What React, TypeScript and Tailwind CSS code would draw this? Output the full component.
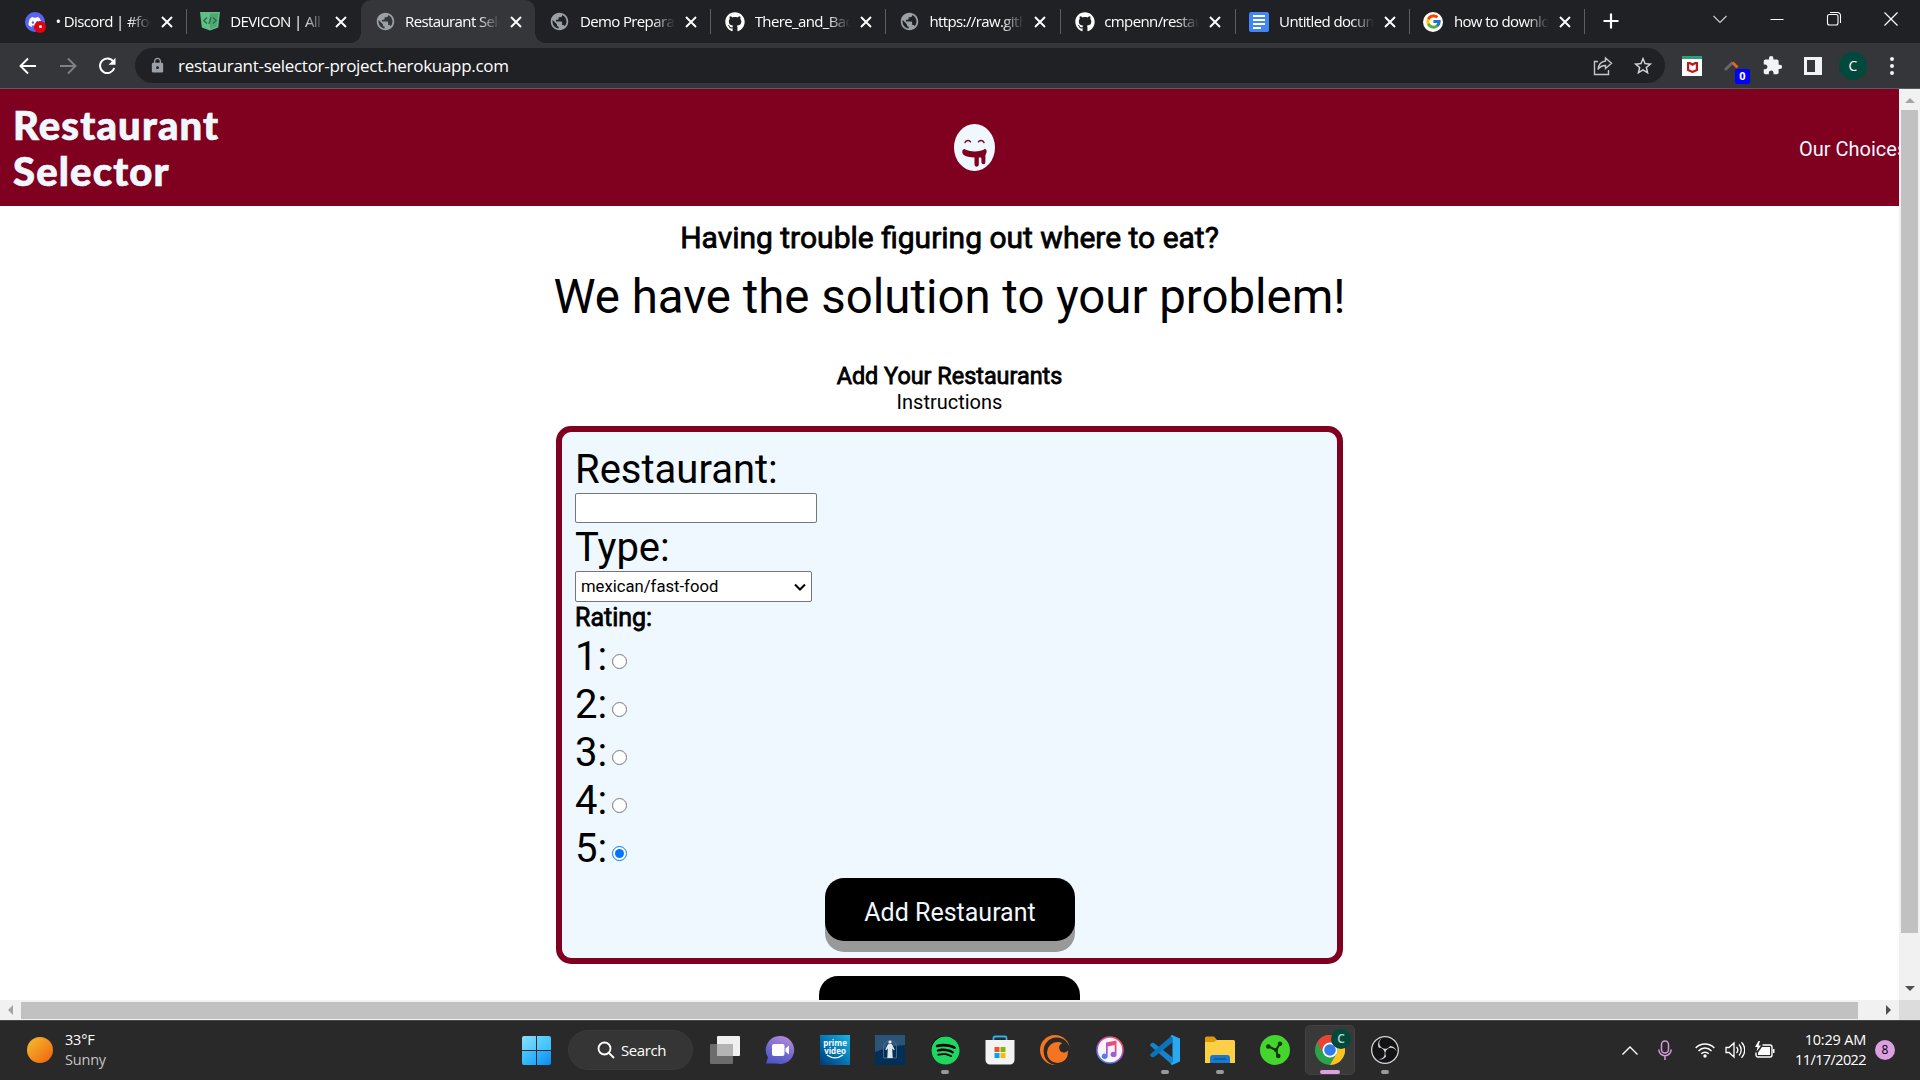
import React from 'react';
import { FaGithub, FaDiscord, FaSpotify } from 'react-icons/fa';
import { MdPublic, MdExtension, MdLock, MdStarBorder } from 'react-icons/md';
import { FcGoogle } from 'react-icons/fc';
import { SiCrunchyroll, SiObsstudio } from 'react-icons/si';

type TabData = { title: string; icon: React.ReactNode; active?: boolean; sep?: boolean };

const Globe = () => <MdPublic className="size-[21px] text-[#9aa0a6]" />;
const Github = () => <FaGithub className="ml-px size-5 text-white" />;

const DiscordIcon = () => (
  <span className="relative block size-5 rounded-full bg-[#5865f2]">
    <FaDiscord className="ml-[3px] size-[14px] translate-y-[3px] text-white" />
    <span className="absolute -right-px -bottom-px flex size-3 items-center justify-center rounded-full bg-[#e3000f]">
      <span className="size-[3px] rounded-full bg-white" />
    </span>
  </span>
);

const DeviconIcon = () => (
  <svg viewBox="0 0 20 20" className="size-5">
    <path d="M0 0h20l-1.8 15.5L10 18.6 1.8 15.500z" fill="#60be86" />
    <path d="M10 1.500h8.200L16.700 14.500 10 17z" fill="#4fa873" />
    <path d="M7 5.500 3.800 8.500 7 11.500M13 5.500l3.200 3-3.200 3M11 5 9 12" stroke="#2c6b47" strokeWidth="1.300" fill="none" />
  </svg>
);

const DocsIcon = () => (
  <span className="flex size-5 flex-col justify-center gap-[2px] rounded-[2px] bg-[#4285f4] px-1">
    <span className="h-[2px] bg-white" />
    <span className="h-[2px] bg-white" />
    <span className="h-[2px] bg-white" />
    <span className="h-[2px] w-2 bg-white" />
  </span>
);

const GoogleIcon = () => (
  <span className="flex size-5 items-center justify-center rounded-full bg-white">
    <FcGoogle className="size-[17px]" />
  </span>
);

const tabs: TabData[] = [
  { title: '• Discord | #food', icon: <DiscordIcon />, sep: true },
  { title: 'DEVICON | All pro', icon: <DeviconIcon /> },
  { title: 'Restaurant Selec', icon: <Globe />, active: true },
  { title: 'Demo Preparati', icon: <Globe />, sep: true },
  { title: 'There_and_Back', icon: <Github />, sep: true },
  { title: 'https://raw.gith', icon: <Globe />, sep: true },
  { title: 'cmpenn/restaur', icon: <Github />, sep: true },
  { title: 'Untitled docum', icon: <DocsIcon />, sep: true },
  { title: 'how to downlo', icon: <GoogleIcon />, sep: true },
];

function Tab({ title, icon, active, sep }: TabData) {
  return (
    <div className={'relative flex h-[43px] w-[174.8px] shrink-0 items-center ' + (active ? 'rounded-t-[10px] bg-[#35363a]' : '')}>
      {active && (
        <>
          <span className="absolute bottom-0 -left-[10px] size-[10px] bg-[radial-gradient(circle_at_0_0,transparent_9.500px,#35363a_10px)]" />
          <span className="absolute -right-[10px] bottom-0 size-[10px] bg-[radial-gradient(circle_at_100%_0,transparent_9.500px,#35363a_10px)]" />
        </>
      )}
      <span className="ml-[14px] w-[30.5px] shrink-0">{icon}</span>
      <span className="-mt-px w-[95px] overflow-hidden text-[15px] leading-[40px] tracking-[-0.62px] whitespace-nowrap text-white [mask-image:linear-gradient(to_right,black_76%,transparent_100%)]">
        {title}
      </span>
      <svg viewBox="0 0 10 10" className="ml-[11px] size-[10px] shrink-0 overflow-visible" stroke="#fff" strokeWidth="1.900">
        <path d="M0 0 10 10M10 0 0 10" />
      </svg>
      {sep && <span className="absolute top-[9px] right-[-1px] h-[25px] w-px bg-[#5c5e62]" />}
    </div>
  );
}

function TabStrip() {
  return (
    <div className="flex h-[43px] bg-[#202124] pl-[11px]">
      {tabs.map((t) => (
        <Tab key={t.title} {...t} />
      ))}
      <svg viewBox="0 0 16 16" className="mt-[13px] ml-[19px] size-4" stroke="#fff" strokeWidth="2.200">
        <path d="M8 .5v15M.5 8h15" />
      </svg>
      <div className="ml-auto flex items-center gap-[43px] pr-[22px] pb-[6px]">
        <svg viewBox="0 0 14 14" className="size-[14px]" fill="none" stroke="#d0d0d0" strokeWidth="1.100">
          <path d="M.5 4 7 10.500 13.500 4" />
        </svg>
        <svg viewBox="0 0 14 14" className="size-[14px]" stroke="#fff" strokeWidth="1">
          <path d="M.5 7.500h13" />
        </svg>
        <svg viewBox="0 0 14 14" className="size-[14px] overflow-visible" fill="none" stroke="#fff" strokeWidth="1.100">
          <rect x=".5" y="2.500" width="10.500" height="10.500" rx="2" />
          <path d="M3 .5h7.500a3 3 0 0 1 3 3V11" />
        </svg>
        <svg viewBox="0 0 14 14" className="size-[14px]" stroke="#fff" strokeWidth="1.200">
          <path d="M.5.5l13 13M13.500.5l-13 13" />
        </svg>
      </div>
    </div>
  );
}

function Toolbar() {
  return (
    <div className="flex h-[46px] items-center border-b border-[#5b5c60] bg-[#35363a] pl-[19px]">
      <svg viewBox="0 0 18 18" className="size-[18px]" fill="none" stroke="#fff" strokeWidth="1.900">
        <path d="M17 9H2M9 1.500 1.500 9 9 16.500" />
      </svg>
      <svg viewBox="0 0 18 18" className="ml-[22px] size-[18px]" fill="none" stroke="#7f8185" strokeWidth="1.900">
        <path d="M1 9h15M9 1.500 16.500 9 9 16.500" />
      </svg>
      <svg viewBox="0 0 18 18" className="ml-[21px] size-[18px]" fill="none" stroke="#fff" strokeWidth="2">
        <path d="M15.300 4.500A7.300 7.300 0 1 0 16.300 11" />
        <path d="M17.500.8v7h-7z" fill="#fff" stroke="none" />
      </svg>
      <div className="ml-[19px] flex h-[35px] w-[1530px] items-center rounded-full bg-[#202124] pl-[14px]">
        <MdLock className="size-[17px] text-[#9aa0a6]" />
        <span className="ml-[12px] text-[17px] leading-[35px] tracking-[-0.29px] text-white">restaurant-selector-project.herokuapp.com</span>
        <svg viewBox="0 0 20 20" className="ml-auto size-5" fill="none" stroke="#c4c7ca" strokeWidth="1.400">
          <path d="M5 5.500H1.500v13h14V14M12.500 2l6 5.300-6 5.200V9.500c-3 0-5.500.8-7.500 4 .5-5 3.500-8 7.500-8.500z" />
        </svg>
        <MdStarBorder className="mr-[11px] ml-[19px] size-[22px] text-[#d3d5d8]" />
      </div>
      <div className="ml-[17px] flex h-5 w-5 flex-col items-center border-t-[3px] border-[#2ba17b] bg-white pt-[3px]">
        <svg viewBox="0 0 10 10" className="size-[11px]" fill="none" stroke="#c01818" strokeWidth="2">
          <path d="M1 0v7.300L5 9 9 7.300V0L5 2.500z" />
        </svg>
      </div>
      <div className="relative ml-[22px] h-5 w-[26px]">
        <svg viewBox="0 0 18 10" className="mt-[5px] h-[10px] w-[18px]" fill="none" strokeWidth="2.800">
          <path d="M1 9 8.500 1.500" stroke="#66686b" />
          <path d="M8.500 1.500l5 5" stroke="#e8622a" />
        </svg>
        <span className="absolute top-[13px] left-[11px] flex h-[15px] w-[15px] items-center justify-center rounded-[2px] bg-[#0000ff] text-[11px] font-bold text-white">0</span>
      </div>
      <MdExtension className="ml-[12px] size-[21px] text-[#f1f3f4]" />
      <span className="ml-[21px] h-[18px] w-[18px] border-[3px] border-r-[7px] border-[#f1f3f4]" />
      <span className="ml-[17px] flex size-7 items-center justify-center rounded-full bg-[#00493c] text-[14px] text-white">C</span>
      <span className="ml-[23px] flex flex-col gap-[3px]">
        <span className="size-1 rounded-full bg-[#f1f3f4]" />
        <span className="size-1 rounded-full bg-[#f1f3f4]" />
        <span className="size-1 rounded-full bg-[#f1f3f4]" />
      </span>
    </div>
  );
}

function DroolFace() {
  return (
    <svg viewBox="0 0 41 47" className="h-[47px] w-[41px]">
      <ellipse cx="20.500" cy="23.500" rx="20.500" ry="23.500" fill="#f0f8ff" />
      <g fill="none" stroke="#800020" strokeWidth="1.500" strokeLinecap="round">
        <path d="M11 18.500c1-2.600 4.500-2.600 5.500-.7M24.500 17.800c1-1.900 4.500-1.900 5.500.7" />
      </g>
      <path
        d="M10.500 25c-2.500 0-3 4-1 5.700 2 1.700 6.500 2.800 11 2.800v6.500c0 3.500 4.300 3.500 4.300 0v-6.500h1.600c.8 0 1 .5 1 1.500v3c0 3 4 3 4 0v-7c1.500-2 2-6-.5-6-4.500 3.200-16 3.200-20.400 0z"
        fill="#800020"
      />
    </svg>
  );
}

function Header() {
  return (
    <header className="flex h-[117px] shrink-0 items-center bg-[#800020] pl-[13px] text-[#f0f8ff]">
      <h1 className="w-[240px] pt-px text-[40px] leading-[46px] font-black tracking-[1.15px] [-webkit-text-stroke:0.7px_#f0f8ff] [font-family:Lato,sans-serif]">
        Restaurant
        <br />
        Selector
      </h1>
      <div className="ml-[701px]">
        <DroolFace />
      </div>
      <span className="ml-auto w-[100px] overflow-hidden text-[20px] leading-6 whitespace-nowrap">
        <span className="block pt-[3px] pb-px">Our Choices</span>
      </span>
    </header>
  );
}

function RestaurantForm() {
  return (
    <form className="flex h-[538px] w-[787px] shrink-0 flex-col items-start rounded-[15px] border-[6px] border-[#800020] bg-[#f0f8ff] p-[13px]">
      <label className="h-12 pt-px text-[40px] leading-[48px]">Restaurant:</label>
      <input className="h-[30px] w-[242px] shrink-0 rounded-[2px] border border-[#767676] bg-white" />
      <label className="h-12 pt-px text-[40px] leading-[48px]">Type:</label>
      <div className="flex h-[31px] w-[237px] items-center justify-between rounded-[2px] border border-[#767676] bg-white pr-[5px] pl-[5px] text-[16.67px]">
        <span>mexican/fast-food</span>
        <svg viewBox="0 0 12 8" className="h-2 w-3" fill="none" stroke="#000" strokeWidth="2">
          <path d="M1 1.500 6 6.500 11 1.500" />
        </svg>
      </div>
      <p className="h-[30px] pt-px text-[25px] leading-[30px] [-webkit-text-stroke:0.8px_black]">Rating:</p>
      {[1, 2, 3, 4, 5].map((n) => (
        <label key={n} className="flex h-12 text-[40px] leading-[48px]">
          <span className="pt-px">{n}:</span>
          <input type="radio" name="rating" defaultChecked={n === 5} className="mt-[22px] ml-[5px] size-[15px]" />
        </label>
      ))}
      <button
        type="button"
        className="mt-[6px] ml-px h-[63px] w-[250px] shrink-0 self-center rounded-[19px] bg-black pt-[7px] text-[25px] leading-[30px] text-[#f0f8ff] shadow-[0_11px_0_#999999]"
      >
        Add Restaurant
      </button>
    </form>
  );
}

function Page() {
  return (
    <div className="flex h-[911px] w-[1899px] flex-col overflow-hidden bg-white text-black [font-family:Roboto,sans-serif]">
      <Header />
      <main className="flex flex-col items-center pt-[14px]">
        <h2 className="text-[30px] leading-9 [-webkit-text-stroke:0.8px_black]">Having trouble figuring out where to eat?</h2>
        <p className="mt-[13px] text-[47.4px] leading-[56px]">We have the solution to your problem!</p>
        <h3 className="mt-[37px] text-[23.4px] leading-7 [-webkit-text-stroke:0.8px_black]">Add Your Restaurants</h3>
        <p className="mb-3 text-[20px] leading-6">Instructions</p>
        <RestaurantForm />
        <div className="mt-3 h-[63px] w-[261px] shrink-0 rounded-[19px] bg-black" />
      </main>
    </div>
  );
}

function Scrollbars() {
  return (
    <div className="flex h-5 bg-[#f1f1f1]">
      <div className="flex w-[1899px] items-center">
        <span className="ml-2 border-y-[5px] border-r-[5px] border-y-transparent border-r-[#a3a3a3]" />
        <span className="ml-2 h-[17px] w-[1837px] bg-[#c1c1c1]" />
        <span className="ml-[28px] border-y-[5px] border-l-[5px] border-y-transparent border-l-[#505050]" />
      </div>
      <div className="grow bg-[#dcdcdc]" />
    </div>
  );
}

const PrimeIcon = () => (
  <span className="flex size-[30px] flex-col items-center bg-linear-to-tr from-[#013a78] via-[#0578b4] to-[#19b5e6] pt-[4px] text-[8px] leading-[7.500px] font-bold text-white">
    <span>prime</span>
    <span>video</span>
    <svg viewBox="0 0 18 5" className="h-[5px] w-[18px]" fill="none" stroke="#fff" strokeWidth="1.300">
      <path d="M1 1c5 3.500 11 3.500 16 0" />
    </svg>
  </span>
);

const taskIcons: { icon: React.ReactNode; open?: boolean; active?: boolean }[] = [
  {
    icon: (
      <svg viewBox="0 0 30 28" className="h-7 w-[30px]">
        <rect x="7" y="0" width="23" height="20" rx="1" fill="#f0f0f0" />
        <rect x="0" y="8" width="23" height="20" rx="1" fill="#6c6c6c" />
        <rect x="7" y="8" width="16" height="12" fill="#b4b4b4" />
      </svg>
    ),
  },
  {
    icon: (
      <svg viewBox="0 0 30 30" className="size-[30px]">
        <defs>
          <linearGradient id="chat" x1="0" y1="1" x2=".4" y2="0">
            <stop offset="0" stopColor="#4a50c8" />
            <stop offset=".5" stopColor="#6a66cc" />
            <stop offset="1" stopColor="#a884d8" />
          </linearGradient>
        </defs>
        <path d="M15.500 1a14 14 0 1 1-4 27.500H1l2-6A14 14 0 0 1 15.500 1z" fill="url(#chat)" />
        <rect x="7" y="9" width="12.500" height="12" rx="2" fill="#fff" />
        <path d="M20.500 13.500 24 10.500v9l-3.500-3z" fill="#fff" />
      </svg>
    ),
  },
  { icon: <PrimeIcon /> },
  {
    icon: (
      <svg viewBox="0 0 30 30" className="size-[30px]">
        <path d="M0 0h30v30H0z" fill="#003058" />
        <path d="M0 0h30v10Q14 11 0 17z" fill="#2b5478" />
        <path d="M8.500 23V12a6.500 6.500 0 0 1 13 0v11z" fill="none" stroke="#54718c" strokeWidth=".8" />
        <circle cx="15" cy="7" r="1.600" fill="#e8edf2" />
        <path d="M13.300 9h3.400l3 5.500-.8.700-1.700-1.700.5 9.500h-5.400l.5-9.500-1.700 1.700-.8-.7z" fill="#dfe6ec" />
      </svg>
    ),
  },
  {
    icon: (
      <span className="flex size-[28px] items-center justify-center rounded-full bg-black">
        <FaSpotify className="size-[29px] shrink-0 text-[#1ed760]" />
      </span>
    ),
    open: true,
  },
  {
    icon: (
      <svg viewBox="0 0 30 30" className="size-[30px]">
        <path d="M8.500 7V3c0-1 .7-1.500 1.500-1.500h10c.8 0 1.500.5 1.500 1.500v4" fill="none" stroke="#35b0ee" strokeWidth="1.800" />
        <path d="M.5 5h29v20a4.500 4.500 0 0 1-4.500 4.500H5A4.500 4.500 0 0 1 .5 25z" fill="#f3f3f3" />
        <path d="M9.500 12h5v5h-5z" fill="#f25022" />
        <path d="M15.500 12h5v5h-5z" fill="#7fba00" />
        <path d="M9.500 18h5v5h-5z" fill="#00a4ef" />
        <path d="M15.500 18h5v5h-5z" fill="#ffb900" />
      </svg>
    ),
  },
  { icon: <SiCrunchyroll className="size-[30px] text-[#f47521]" /> },
  {
    icon: (
      <svg viewBox="0 0 30 30" className="size-[30px]">
        <defs>
          <linearGradient id="note" x1="0" y1="1" x2=".6" y2="0">
            <stop offset="0" stopColor="#2f8df5" />
            <stop offset=".5" stopColor="#9a5be0" />
            <stop offset="1" stopColor="#f74b6b" />
          </linearGradient>
        </defs>
        <circle cx="15" cy="15" r="13" fill="#f6f4fa" stroke="url(#note)" strokeWidth="1.600" />
        <path d="M11 7.500 21.500 5.500v14a3 2.600 0 1 1-1.800-2.400V10l-7 1.400v10a3 2.600 0 1 1-1.700-2.400z" fill="url(#note)" />
      </svg>
    ),
  },
  {
    icon: (
      <svg viewBox="0 0 30 30" className="size-[30px]">
        <path d="M0 9.500 2 7.700 4 8 22.500 22.500V30L0.500 11z" fill="#1484cf" />
        <path d="M0 20.500 2 22.300 4 22 22.500 7.500V0L.5 19z" fill="#0a74bd" />
        <path d="M22 0 30 3.500v23L22 30l-1.500-1 2-2V3l-2-2z" fill="#29a9f2" />
      </svg>
    ),
    open: true,
  },
  {
    icon: (
      <svg viewBox="0 0 30 28" className="h-7 w-[30px]">
        <path d="M0 2a1.500 1.500 0 0 1 1.500-1.500H9L12 4v4H0z" fill="#dc9a0b" />
        <path d="M0 6h9l3-2h16.500A1.500 1.500 0 0 1 30 5.500V27H0z" fill="#fccf45" />
        <path d="M5 27v-5a3 3 0 0 1 3-3h14a3 3 0 0 1 3 3v5z" fill="#1779cf" />
        <path d="M9 23h12" stroke="#0b4d8c" strokeWidth="1.200" />
      </svg>
    ),
    open: true,
  },
  {
    icon: (
      <svg viewBox="0 0 30 30" className="size-[30px]">
        <circle cx="15" cy="15" r="15" fill="#44d62c" />
        <g stroke="#17330f" strokeWidth="2.200" fill="#17330f">
          <path d="M16 15 8.500 11.500M16 15l4-6.500M16 15l2 6.500" />
          <circle cx="8.300" cy="11.500" r="1.200" />
          <circle cx="20" cy="8.700" r="1.200" />
          <circle cx="18.300" cy="21" r="1.200" />
          <circle cx="16" cy="15" r="1" />
        </g>
      </svg>
    ),
  },
  {
    icon: (
      <span className="relative block size-[30px]">
        <svg viewBox="0 0 30 30" className="size-[30px]">
          <circle cx="15" cy="15" r="15" fill="#2ba24c" />
          <path d="M2 7.500A15 15 0 0 1 28 7.500H15a7.500 7.500 0 0 0-6.500 11.200z" fill="#ea4335" />
          <path d="M28 7.500A15 15 0 0 1 15 30l6.500-11.200A7.500 7.500 0 0 0 15 7.500z" fill="#fcc31e" />
          <circle cx="15" cy="15" r="7.500" fill="#fff" />
          <circle cx="15" cy="15" r="5.800" fill="#2f7bea" />
        </svg>
        <span className="absolute -top-[6px] left-4 flex size-5 items-center justify-center rounded-full bg-[#00493c] text-[12px] font-semibold text-[#b9d6cf]">C</span>
      </span>
    ),
    open: true,
    active: true,
  },
  {
    icon: (
      <span className="flex size-7 items-center justify-center rounded-full bg-[#131214]">
        <SiObsstudio className="size-7 text-[#d8d8d8]" />
      </span>
    ),
    open: true,
  },
];

function Taskbar() {
  return (
    <div className="flex h-[60px] items-center bg-[#292929] text-[15px] text-white shadow-[inset_0_1px_0_#474747]">
      <span className="ml-[27px] size-[26px] rounded-full bg-linear-to-br from-[#efc02f] to-[#f05a0c]" />
      <div className="ml-[12px] w-[457px] text-[14.500px] leading-5 tracking-[-0.2px]">
        <div className="-mt-px">33°F</div>
        <div className="text-[#c4c4c4]">Sunny</div>
      </div>
      <div className="grid size-[29px] grid-cols-2 gap-px">
        <span className="rounded-tl-[2px] bg-linear-to-br from-[#86dcff] to-[#4fc8fb]" />
        <span className="rounded-tr-[2px] bg-linear-to-br from-[#5fd6ff] to-[#35bdfb]" />
        <span className="rounded-bl-[2px] bg-linear-to-br from-[#4ac8fd] to-[#1fa6f8]" />
        <span className="rounded-br-[2px] bg-linear-to-br from-[#33b6fb] to-[#0a8cf7]" />
      </div>
      <div className="ml-[17px] flex h-10 w-[125px] items-center rounded-full border border-[#3a3a3a] bg-[#353535] pl-[28px]">
        <svg viewBox="0 0 18 18" className="size-[18px]" fill="none" stroke="#fff" strokeWidth="1.800">
          <circle cx="7.500" cy="7.500" r="6" />
          <path d="M12 12l5 5" />
        </svg>
        <span className="ml-[6px] tracking-[-0.4px]">Search</span>
      </div>
      <div className="ml-[7px] flex gap-[5px]">
        {taskIcons.map(({ icon, open, active }, i) => (
          <div
            key={i}
            className={'relative flex size-[50px] items-center justify-center rounded-[5px] ' + (active ? 'border border-[#424242] bg-[#393939]' : '')}
          >
            {icon}
            {open && !active && <span className="absolute bottom-px left-[21px] h-1 w-2 rounded-full bg-[#9a9a9a]" />}
            {active && <span className="absolute bottom-0 left-[14px] h-1 w-5 rounded-full bg-[#dc9fe2]" />}
          </div>
        ))}
      </div>
      <div className="ml-auto flex items-center pr-[25px]">
        <svg viewBox="0 0 16 9" className="h-[9px] w-4" fill="none" stroke="#fff" strokeWidth="1.400">
          <path d="M.5 8.500 8 1l7.500 7.500" />
        </svg>
        <svg viewBox="0 0 14 20" className="ml-5 h-5 w-[14px]" fill="none" stroke="#d39bd9" strokeWidth="1.500">
          <rect x="3.500" y="1" width="7" height="12" rx="3.500" />
          <path d="M.8 9.500a6.200 6.200 0 0 0 12.400 0M7 16v4" />
        </svg>
        <svg viewBox="0 0 20 16" className="ml-[23px] h-4 w-5" fill="none" stroke="#fff" strokeWidth="1.500">
          <path d="M.7 6a13 13 0 0 1 18.600 0M3.500 8.900a9 9 0 0 1 13 0M6.300 11.700a5.200 5.200 0 0 1 7.400 0" />
          <circle cx="10" cy="14" r="1.700" fill="#fff" stroke="none" />
        </svg>
        <svg viewBox="0 0 20 18" className="ml-[10px] h-[18px] w-5" fill="none" stroke="#fff" strokeWidth="1.300">
          <path d="M1 6.500h3L9 2v14l-5-4.500H1zM11.500 6a4.500 4.500 0 0 1 0 6M14 3.500a8 8 0 0 1 0 11M16.500 1.200a11 11 0 0 1 0 15.600" />
        </svg>
        <svg viewBox="0 0 20 18" className="ml-[10px] h-[18px] w-5" fill="none" stroke="#fff" strokeWidth="1.400">
          <path d="M7.500 4H15a2 2 0 0 1 2 2v8a2 2 0 0 1-2 2H3a2 2 0 0 1-2-2V11.500" />
          <path d="M7 6h8v8H3v-2.500z" fill="#fff" stroke="none" />
          <path d="M18 8h1.500v4H18zM3.500 0 0 6h2.500L1.500 10.500 6 4.500H3.500L5 0z" fill="#fff" stroke="none" />
        </svg>
        <div className="-mt-px ml-[20px] w-[71px] text-right text-[14.500px] leading-5 whitespace-nowrap">
          <div className="tracking-[-0.2px]">10:29 AM</div>
          <div className="-ml-2 tracking-[-0.6px]">11/17/2022</div>
        </div>
        <span className="ml-[9px] flex size-5 items-center justify-center rounded-full bg-[#dc9fe2] text-[12px] text-black">8</span>
      </div>
    </div>
  );
}

export default function App() {
  return (
    <div className="flex h-[1080px] w-[1920px] flex-col overflow-hidden bg-white [font-family:'Open_Sans',sans-serif]">
      <TabStrip />
      <Toolbar />
      <div className="flex">
        <Page />
        <div className="flex w-[21px] flex-col items-center bg-[#f1f1f1]">
          <span className="mt-[9px] border-x-[5px] border-b-[5px] border-x-transparent border-b-[#a3a3a3]" />
          <span className="mt-[7px] h-[823px] w-[17px] bg-[#c1c1c1]" />
          <span className="mt-[53px] border-x-[5px] border-t-[5px] border-x-transparent border-t-[#505050]" />
        </div>
      </div>
      <Scrollbars />
      <Taskbar />
    </div>
  );
}
